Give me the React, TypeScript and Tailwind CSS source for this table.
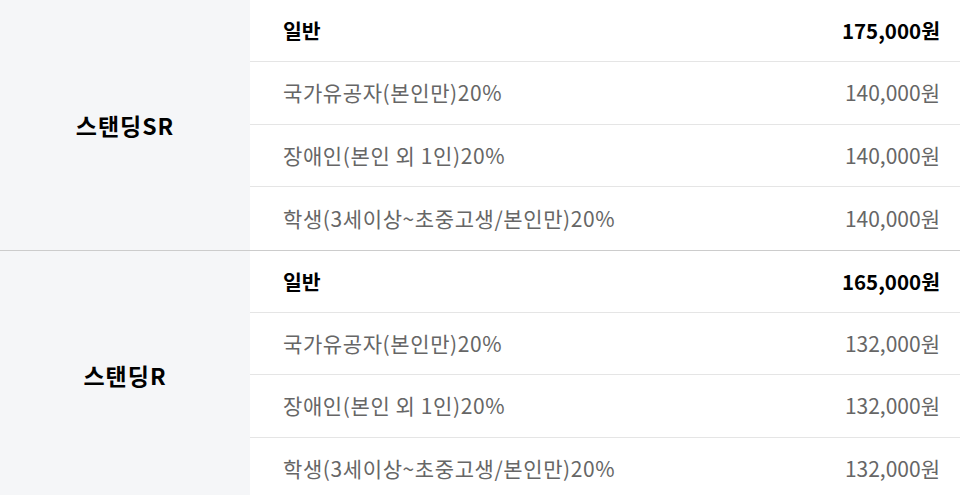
import React from "react";

const sections = [
  {
    name: "스탠딩SR",
    rows: [
      ["일반", "175,000원"],
      ["국가유공자(본인만)20%", "140,000원"],
      ["장애인(본인 외 1인)20%", "140,000원"],
      ["학생(3세이상~초중고생/본인만)20%", "140,000원"],
    ],
  },
  {
    name: "스탠딩R",
    rows: [
      ["일반", "165,000원"],
      ["국가유공자(본인만)20%", "132,000원"],
      ["장애인(본인 외 1인)20%", "132,000원"],
      ["학생(3세이상~초중고생/본인만)20%", "132,000원"],
    ],
  },
];

export default function App() {
  return (
    <div
      className="w-[960px] h-[495px] overflow-hidden bg-white"
      style={{ fontFamily: '"Noto Sans CJK KR", "Noto Sans", sans-serif' }}
    >
      {sections.map((s, si) => (
        <div key={si} className={`flex ${si === 0 ? "border-b border-[#cccccc]" : ""}`}>
          <div className="w-[250px] shrink-0 bg-[#f5f6f8] flex items-center justify-center text-[23px] tracking-[1px] font-bold text-black">
            {s.name}
          </div>
          <div className="flex-1">
            {s.rows.map((r, ri) => (
              <div
                key={ri}
                className={`h-[62.4px] flex items-center justify-between pl-[33px] pr-[20px] ${
                  ri < 3 ? "border-b border-[#e5e5e5]" : ""
                } ${ri === 0 ? "font-bold text-[20.5px] text-black" : "text-[21px] text-[#666666]"}`}
              >
                <span className={ri === 0 ? "" : "tracking-[0.6px]"}>{r[0]}</span>
                <span>{r[1]}</span>
              </div>
            ))}
          </div>
        </div>
      ))}
    </div>
  );
}
